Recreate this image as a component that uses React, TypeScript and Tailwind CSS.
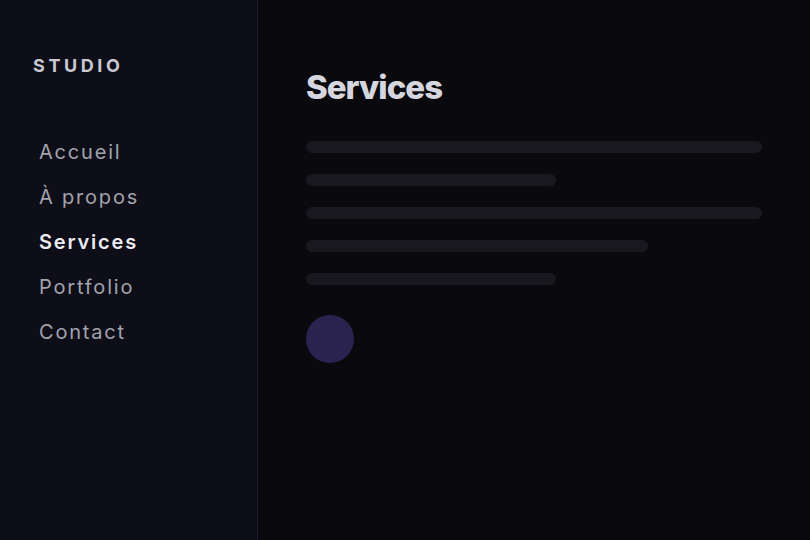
const navItems = ['Accueil', 'À propos', 'Services', 'Portfolio', 'Contact'];
const active = 'Services';

const bars = ['w-full', 'w-[250px]', 'w-full', 'w-[342px]', 'w-[250px]'];

export default function App() {
  return (
    <div
      className="flex w-[810px] h-[540px] overflow-hidden bg-[#0a0a0e]"
      style={{ fontFamily: 'Inter, "Noto Sans", sans-serif' }}
    >
      {/* Sidebar */}
      <aside className="w-[258px] shrink-0 h-full bg-[#0e0e18] border-r border-[#1d1d28] pt-[53px] pl-[33px]">
        <div className="text-[18px] leading-[26px] font-bold tracking-[0.2em] text-[#c9c9d2]">
          STUDIO
        </div>
        <nav className="mt-[50px] flex flex-col">
          {navItems.map((item) => (
            <a
              key={item}
              className={`px-1.5 h-[45px] flex items-center text-[20px] tracking-[0.09em] ${
                item === active ? 'font-semibold text-[#ececf2]' : 'text-[#a2a2ad]'
              }`}
            >
              {item}
            </a>
          ))}
        </nav>
      </aside>

      {/* Main */}
      <main className="flex-1 px-12 pt-[65px]">
        <h1 className="text-[33px] leading-[44px] font-extrabold tracking-[-0.03em] text-[#d6d6de]">
          Services
        </h1>
        <div className="mt-[32px] flex flex-col gap-[21px]">
          {bars.map((w, i) => (
            <div key={i} className={`${w} h-3 rounded-full bg-[#18181e]`} />
          ))}
        </div>
        <div className="mt-[30px] w-12 h-12 rounded-full bg-[#2a2350]" />
      </main>
    </div>
  );
}
